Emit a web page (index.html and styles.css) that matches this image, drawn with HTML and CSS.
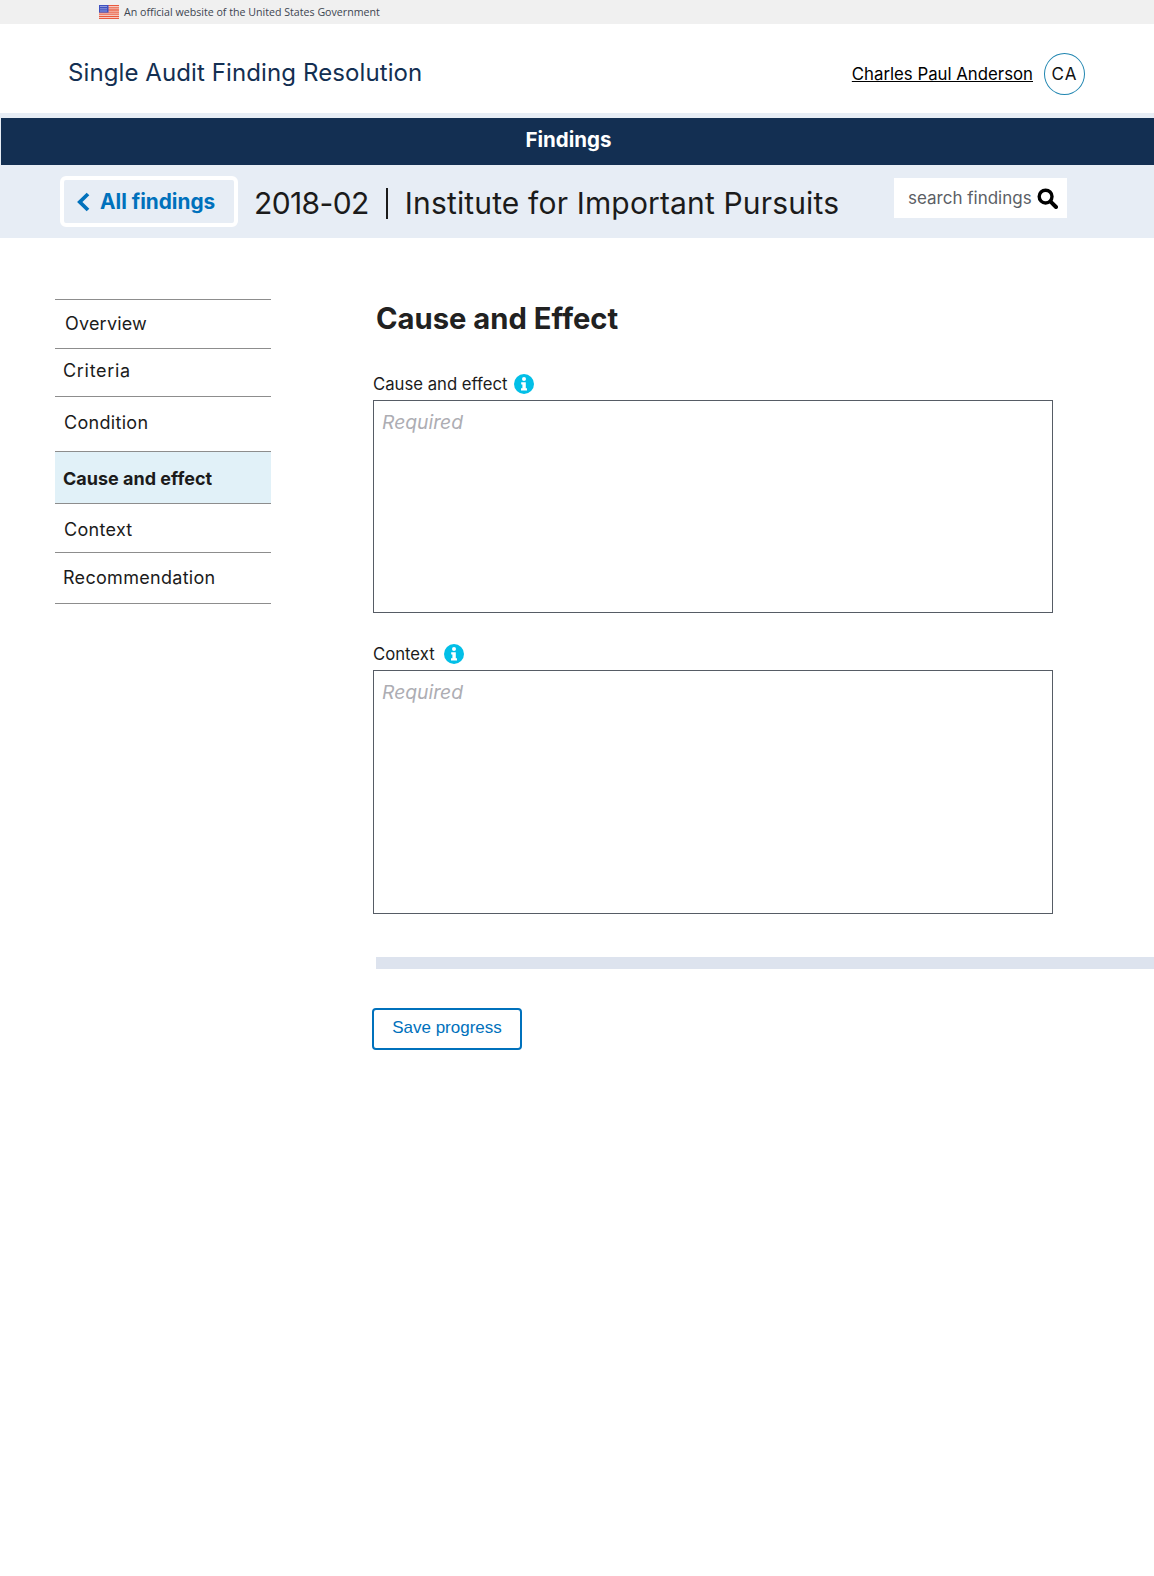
FILE: index.html
```html
<!DOCTYPE html>
<html lang="en">
<head>
<meta charset="utf-8">
<title>Single Audit Finding Resolution</title>
<link rel="stylesheet" href="styles.css">
</head>
<body>
<div class="gov-banner">
  <svg class="flag" width="20" height="14" viewBox="0 0 20 14" aria-hidden="true">
    <rect width="20" height="14" fill="#f8f0ee"/>
    <path d="M0 .7h20M0 2.9h20M0 5h20M0 7.1h20M0 9.2h20M0 11.3h20M0 13.3h20" stroke="#ea5a3e" stroke-width="1.3"/>
    <rect width="9.5" height="7.6" fill="#3f51c0"/>
    <path d="M1.5 1.5h6.5M1.5 3.8h6.5M1.5 6h6.5" stroke="#dfe3f6" stroke-width="1" stroke-dasharray="1 1"/>
  </svg>
  <span>An official website of the United States Government</span>
</div>
<header class="site-header">
  <div class="site-title">Single Audit Finding Resolution</div>
  <div class="user">
    <a class="user-name" href="#">Charles Paul Anderson</a>
    <span class="avatar">CA</span>
  </div>
</header>
<div class="section-bar">Findings</div>
<div class="sub-bar">
  <a class="back" href="#">
    <svg width="14" height="20" viewBox="0 0 14 20" aria-hidden="true"><path d="M12 2 3.8 10l8.2 8" fill="none" stroke="#0071bc" stroke-width="3.8"/></svg>
    All findings
  </a>
  <h1 class="finding-title"><span class="finding-id">2018-02</span><span class="sep"></span>Institute for Important Pursuits</h1>
  <div class="search">
    <span>search findings</span>
    <svg width="21" height="21" viewBox="0 0 21 21" aria-hidden="true"><circle cx="8.6" cy="8.6" r="6.4" fill="none" stroke="#000" stroke-width="3.4"/><path d="m13.6 13.6 5.4 5.4" stroke="#000" stroke-width="4" stroke-linecap="round"/></svg>
  </div>
</div>
<main class="layout">
  <nav class="side-nav">
    <a class="nav-item n1" href="#">Overview</a>
    <a class="nav-item n2" href="#">Criteria</a>
    <a class="nav-item n3" href="#">Condition</a>
    <a class="nav-item n4 active" href="#">Cause and effect</a>
    <a class="nav-item n5" href="#">Context</a>
    <a class="nav-item n6" href="#">Recommendation</a>
  </nav>
  <section class="content">
    <h2 class="heading">Cause and Effect</h2>
    <div class="field first">
      <label class="field-label">Cause and effect
        <svg class="info" width="20" height="20" viewBox="0 0 20 20" aria-hidden="true"><circle cx="10" cy="10" r="10" fill="#02bfe7"/><circle cx="10" cy="5" r="2" fill="#fff"/><path d="M7.2 8.2h4.6v6h1.2v2.4H7v-2.4h1.4v-3.6H7.2z" fill="#fff"/></svg>
      </label>
      <div class="textarea tall-a">Required</div>
    </div>
    <div class="field second">
      <label class="field-label">Context
        <svg class="info" width="20" height="20" viewBox="0 0 20 20" aria-hidden="true"><circle cx="10" cy="10" r="10" fill="#02bfe7"/><circle cx="10" cy="5" r="2" fill="#fff"/><path d="M7.2 8.2h4.6v6h1.2v2.4H7v-2.4h1.4v-3.6H7.2z" fill="#fff"/></svg>
      </label>
      <div class="textarea tall-b">Required</div>
    </div>
    <div class="divider"></div>
    <button class="save" type="button">Save progress</button>
  </section>
</main>
</body>
</html>
```
FILE: styles.css
```css
* { box-sizing: border-box; }
html, body { margin: 0; padding: 0; }
body {
  width: 1154px;
  height: 1576px;
  overflow: hidden;
  background: #fff;
  color: #212121;
  font-family: "Inter", "Liberation Sans", sans-serif;
}
a { color: inherit; text-decoration: none; }

.gov-banner {
  height: 24px;
  background: #f0f0f0;
  display: flex;
  align-items: center;
  gap: 5px;
  padding-left: 99px;
  font-family: "Open Sans", sans-serif;
  font-size: 10.65px;
  color: #3d4551;
}
.flag { flex: none; }

.site-header {
  height: 89px;
  display: flex;
  align-items: center;
  justify-content: space-between;
  padding: 8px 69px 0 68px;
}
.site-title { font-size: 24px; color: #132f52; letter-spacing: 0.1px; }
.user { display: flex; align-items: center; gap: 11px; padding-top: 2px; }
.user-name {
  font-size: 16.8px;
  color: #000;
  text-decoration: underline;
}
.avatar {
  width: 41px;
  height: 42px;
  border: 1px solid #1f85b0;
  border-radius: 50%;
  display: flex;
  align-items: center;
  justify-content: center;
  font-size: 17px;
  letter-spacing: 1px;
  color: #111;
}

.section-bar {
  height: 52px;
  border-top: 5px solid #e7edf5;
  border-left: 1px solid #e7edf5;
  background: #132f52;
  display: flex;
  align-items: center;
  justify-content: center;
  padding: 0 18px 4px 0;
  color: #fff;
  font-size: 20.5px;
  font-weight: 700;
}

.sub-bar {
  height: 73px;
  background: #e7edf5;
  display: flex;
  align-items: center;
  padding-left: 60px;
}
.back {
  width: 178px;
  height: 51px;
  border: 4px solid #fff;
  border-radius: 6px;
  display: flex;
  align-items: center;
  gap: 10px;
  padding-left: 12px;
  color: #0071bc;
  font-size: 20.8px;
  font-weight: 700;
}
.finding-title {
  margin: 3px 0 0 16px;
  font-size: 30px;
  font-weight: 400;
  color: #1b1b1b;
  display: flex;
  align-items: center;
  width: 640px;
  letter-spacing: 0.16px;
}
.finding-id { letter-spacing: -0.6px; }
.sep {
  width: 2px;
  height: 31px;
  background: #1b1b1b;
  margin: 0 17px;
}
.search {
  width: 173px;
  height: 40px;
  margin-top: -7px;
  background: #fff;
  display: flex;
  align-items: center;
  gap: 5px;
  padding-left: 14px;
  font-size: 17px;
  white-space: nowrap;
  color: #5c5f66;
}

.layout { display: flex; align-items: flex-start; }
.side-nav {
  width: 216px;
  margin: 61px 0 0 55px;
  border-top: 1px solid #8d8d8d;
  display: flex;
  flex-direction: column;
}
.nav-item {
  display: flex;
  align-items: center;
  border-bottom: 1px solid #8d8d8d;
  font-size: 18px;
  letter-spacing: 0.3px;
  color: #1b1b1b;
}
.n1 { height: 49px; padding: 0 0 2px 10px; letter-spacing: 0.2px; }
.n2 { height: 48px; padding: 0 0 4px 8px; letter-spacing: 0.7px; }
.n3 { height: 55px; padding: 0 0 4px 9px; }
.n4 { height: 52px; padding: 2px 0 0 8px; }
.n5 { height: 49px; padding: 3px 0 0 9px; }
.n6 { height: 51px; padding: 0 0 2px 8px; }
.active { background: #e1f1f8; font-weight: 700; letter-spacing: 0; }

.content { flex: 1; margin-left: 102px; }
.heading {
  margin: 63px 0 0 3px;
  font-size: 29.2px;
  line-height: 36px;
  font-weight: 700;
  color: #212121;
}
.field { width: 680px; }
.first { margin-top: 37px; }
.second { margin-top: 31px; }
.field-label {
  display: flex;
  align-items: center;
  gap: 7px;
  height: 20px;
  font-size: 16.7px;
  color: #1b1b1b;
  margin-bottom: 6px;
}
.second .field-label { gap: 9px; }
.textarea {
  border: 1px solid #565c65;
  padding: 9px 8px;
  font-size: 19.3px;
  line-height: 24px;
  font-style: italic;
  color: #adadb3;
}
.tall-a { height: 213px; }
.tall-b { height: 244px; }
.divider {
  height: 12px;
  margin: 43px 0 0 3px;
  background: #dde3ee;
}
.save {
  display: block;
  width: 150px;
  height: 42px;
  margin-top: 39px;
  margin-left: -1px;
  padding: 0 0 3px;
  background: #fff;
  border: 2px solid #0071bc;
  border-radius: 4px;
  color: #0071bc;
  font-family: "Liberation Sans", sans-serif;
  font-size: 17px;
}
```
